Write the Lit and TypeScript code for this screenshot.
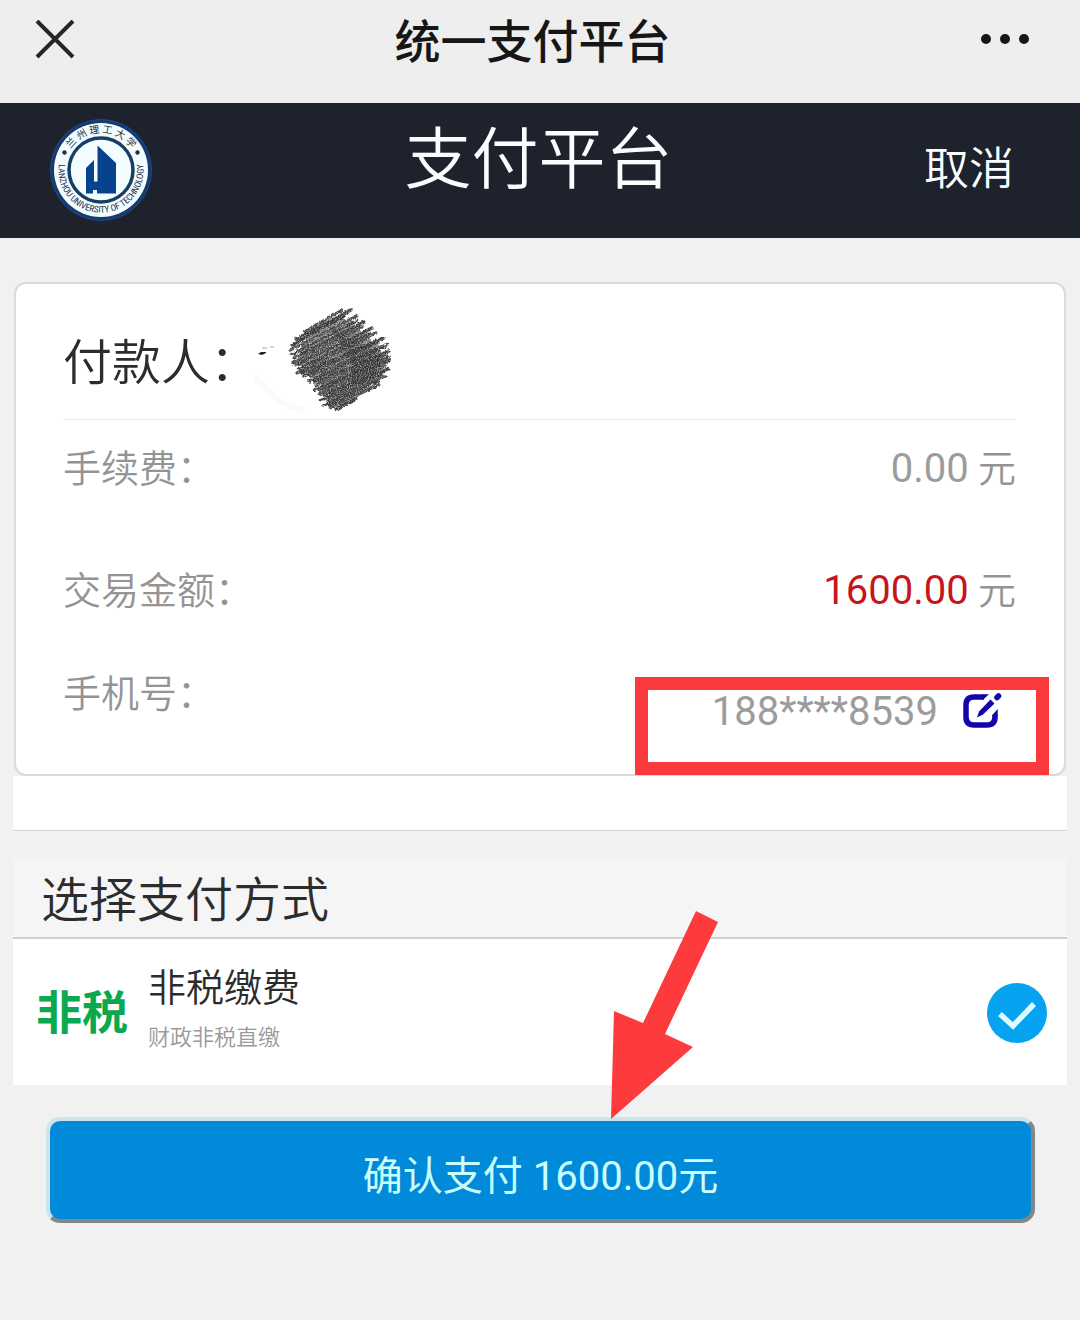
import { LitElement, html, css, svg } from "lit";
import { customElement, property } from "lit/decorators.js";

@customElement("university-seal")
class UniversitySeal extends LitElement {
  static styles = css`
    :host { display: block; width: 104px; height: 104px; }
    .seal { display: block; width: 100%; height: 100%; }
    .latin { font: 9px "Liberation Sans Narrow", "Roboto Condensed", sans-serif; fill: #23304a; }
    .han { font: 10px "Noto Sans CJK SC", sans-serif; fill: #23303c; }
  `;

  render() {
    return html`
      <svg class="seal" viewBox="0 0 104 104" role="img" aria-label="兰州理工大学">
        <defs>
          <path id="lower" d="M11 41 A42.500 42.500 0 1 0 93 41" />
          <path id="upper" d="M18.600 36 A37 37 0 0 1 85.400 36" />
        </defs>
        <circle cx="52" cy="52" r="50.500" fill="#163a70" stroke="#1d4a80" stroke-width="1" />
        <circle cx="52" cy="52" r="47" fill="#f3fcff" />
        <circle cx="52" cy="52" r="32" fill="#f3fcff" stroke="#173f63" stroke-width="3.500" />
        <circle cx="15.500" cy="34.500" r="2.200" fill="#26343e" />
        <circle cx="88.500" cy="34.500" r="2.200" fill="#26343e" />
        <text class="han"><textPath href="#upper" startOffset="50%" text-anchor="middle">兰 州 理 工 大 学</textPath></text>
        <text class="latin"><textPath href="#lower" startOffset="50%" text-anchor="middle">LANZHOU UNIVERSITY OF TECHNOLOGY</textPath></text>
        <path fill="#07428f" d="M48.500 27.500 L67 45 V75.500 H48 V72 H44 V75.500 H37 V50 L45 42 V63.500 H48.500 Z" />
      </svg>
    `;
  }
}

@customElement("scribble-mark")
class ScribbleMark extends LitElement {
  static styles = css`
    :host { display: block; width: 144px; height: 112px; }
    .mark { display: block; width: 100%; height: 100%; }
  `;

  /* Start and end point of each pen stroke, from the top down. */
  private strokes = [
    [50, 30, 88, 8], [42, 37, 97, 8], [38, 43, 90, 14], [36, 48, 103, 14],
    [37, 53, 104, 18], [40, 56, 110, 20], [39, 61, 108, 25], [42, 63, 118, 26],
    [44, 67, 116, 31], [43, 71, 122, 31], [48, 71, 129, 36], [50, 74, 124, 40],
    [56, 74, 134, 42], [55, 79, 130, 45], [60, 80, 135, 49], [62, 83, 132, 53],
    [60, 88, 135, 55], [66, 88, 136, 58], [65, 92, 131, 64], [70, 93, 134, 67],
    [67, 98, 128, 72], [73, 98, 131, 74], [70, 103, 124, 79], [76, 103, 125, 83],
    [76, 106, 112, 89], [82, 107, 102, 97],
  ];

  render() {
    return html`
      <svg class="mark" viewBox="0 0 144 112" aria-hidden="true">
        <defs>
          <filter id="rough" x="-10%" y="-10%" width="120%" height="120%" color-interpolation-filters="sRGB">
            <feTurbulence type="fractalNoise" baseFrequency="0.3" numOctaves="2" seed="4" result="n" />
            <feDisplacementMap in="SourceGraphic" in2="n" scale="4" xChannelSelector="R" yChannelSelector="G" result="d" />
            <feTurbulence type="fractalNoise" baseFrequency="0.9" numOctaves="1" seed="9" />
            <feColorMatrix values="0 0 0 0 0  0 0 0 0 0  0 0 0 0 0  0 0 0 -2 1.950" result="g" />
            <feComposite in="d" in2="g" operator="in" />
          </filter>
        </defs>
        <path d="M0 72 Q22 104 50 108" fill="none" stroke="#fafafa" stroke-width="6" />
        <path d="M4 52 l3 -2 h5 v1 l-4 2 z" fill="#222" />
        <path d="M8 46 h5 M16 45 h4" stroke="#aaa" stroke-width="1" />
        <g filter="url(#rough)" stroke-linecap="round">
          <polygon points="46,46 62,28 86,14 98,20 112,34 126,44 130,62 120,78 92,96 78,98 68,84 46,62" fill="#555" opacity="0.700" />
          ${this.strokes.map(([x1, y1, x2, y2], i) => svg`<line x1=${x1} y1=${y1} x2=${x2} y2=${y2}
            stroke=${i % 3 ? "#3c3c3c" : "#4c4c4c"} stroke-width=${i % 4 ? 3.2 : 2.6} />`)}
          <path d="M74 24 L112 44 L128 54 L122 72 L96 84 L98 60 Z" fill="#333" opacity="0.600" />
        </g>
      </svg>
    `;
  }
}

@customElement("amount-row")
class AmountRow extends LitElement {
  @property() label = "";
  @property() amount = "";
  @property({ type: Boolean }) strong = false;

  static styles = css`
    :host { display: flex; justify-content: space-between; align-items: center; }
    .label, .value { color: #949494; }
    .number { font-size: 40px; font-weight: 400; color: #9c9c9c; }
    .strong { color: #c4161c; }
  `;

  render() {
    return html`
      <span class="label">${this.label}：</span>
      <span class="value"><span class="number ${this.strong ? "strong" : ""}">${this.amount}</span> 元</span>
    `;
  }
}

@customElement("app-root")
class AppRoot extends LitElement {
  static styles = css`
    :host {
      display: block;
      min-height: 100vh;
      background: #f1f1f1;
      color: #2c2c2c;
      font-family: Roboto, "Noto Sans CJK SC", sans-serif;
      font-size: 38px;
      font-weight: 350;
      line-height: 56px;
    }
    * { box-sizing: border-box; }
    h1, h2, p { margin: 0; font-weight: inherit; }
    button { font: inherit; background: none; border: 0; padding: 0; cursor: pointer; }
    svg { display: block; }

    .browser-bar {
      display: grid;
      grid-template-columns: 1fr auto 1fr;
      align-items: center;
      height: 103px;
      padding: 0 50px 24px 35px;
      background: #eee;
    }
    .browser-title { padding-top: 4px; font-size: 46px; font-weight: 500; color: #161616; }
    .more { justify-self: end; }

    .site-header {
      display: grid;
      grid-template-columns: 1fr auto 1fr;
      height: 135px;
      padding: 15px 66px 0 49px;
      background: #1e222d;
      color: #f8feff;
    }
    .site-title { padding: 4px 0 0 14px; font-size: 67px; line-height: 76px; }
    .cancel { justify-self: end; align-self: start; margin-top: 24px; font-size: 45px; color: inherit; }

    .details {
      position: relative;
      margin: 44px 14px 0;
      padding: 24px 48px 0 47px;
      border: 2px solid #dadada;
      border-radius: 12px;
      background: #fff;
    }
    .payer {
      display: flex;
      height: 112px;
      border-bottom: 1px solid #eaeaea;
    }
    .payer-label { margin-top: 28px; font-size: 49px; }
    .payer-name { margin: -6px 0 0 -5px; }
    .rows { display: grid; grid-template-rows: 98px 146px 110px; align-items: center; }
    .phone { display: flex; justify-content: space-between; align-self: start; margin-top: 2px; }
    .phone-label { color: #949494; }
    .phone-value {
      display: flex;
      align-items: center;
      gap: 24px;
      margin: 18px 14px 0 0;
      color: #9c9c9c;
      font-size: 40px;
      font-weight: 400;
    }
    .edit { padding-bottom: 3px; }
    .frame {
      position: absolute;
      right: 15px;
      bottom: -1px;
      width: 414px;
      height: 98px;
      border: 13px solid #fb3a3e;
      pointer-events: none;
    }
    .strip { height: 55px; margin: 0 13px; background: #fff; border-bottom: 1px solid #d6d6d6; }

    .methods { position: relative; margin: 28px 13px 0; }
    .methods-title {
      padding: 12px 28px 6px;
      border-bottom: 2px solid #d2d2d2;
      background: #f5f5f5;
      font-size: 48px;
      line-height: 60px;
    }
    .method {
      display: flex;
      align-items: center;
      gap: 20px;
      height: 146px;
      padding: 2px 20px 0 23px;
      background: #fff;
    }
    .badge { color: #0aa84f; font-size: 46px; font-weight: 700; }
    .method-text { flex: 1; display: grid; gap: 10px; padding-bottom: 8px; }
    .method-name { line-height: 48px; }
    .method-note { font-size: 22px; line-height: 32px; color: #9a9a9a; }
    .choice { display: grid; width: 60px; height: 60px; }
    .choice > * { grid-area: 1 / 1; }
    .radio { appearance: none; width: 60px; height: 60px; margin: 0; border-radius: 50%; background: #ddd; }
    .radio:checked { background: #07a2f0; }
    .arrow { position: absolute; left: 56.600%; top: 50px; pointer-events: none; }

    .pay {
      display: block;
      width: calc(100% - 91px);
      margin: 32px 45px 0 46px;
      padding: 28px 0 14px;
      border: 4px solid;
      border-color: #cce4ec #848688 #848688 #cce4ec;
      border-radius: 14px;
      background: #028ada;
      color: #c9ffff;
      font-size: 40px;
      font-weight: 400;
    }
  `;

  render() {
    return html`
      <header class="browser-bar">
        <button class="close" aria-label="关闭">
          <svg width="40" height="40" viewBox="0 0 40 40">
            <path d="M2 1 L38 37 M38 1 L2 37" stroke="#262626" stroke-width="4" />
          </svg>
        </button>
        <span class="browser-title">统一支付平台</span>
        <button class="more" aria-label="更多">
          <svg width="50" height="12" viewBox="0 0 50 12" fill="#161616">
            <circle cx="6" cy="5" r="5" /><circle cx="25" cy="5" r="5" /><circle cx="44" cy="5" r="5" />
          </svg>
        </button>
      </header>

      <div class="site-header">
        <university-seal></university-seal>
        <h1 class="site-title">支付平台</h1>
        <button class="cancel">取消</button>
      </div>

      <main>
        <section class="details">
          <div class="payer">
            <span class="payer-label">付款人：</span>
            <scribble-mark class="payer-name"></scribble-mark>
          </div>
          <div class="rows">
            <amount-row label="手续费" amount="0.00"></amount-row>
            <amount-row label="交易金额" amount="1600.00" strong></amount-row>
            <div class="phone">
              <span class="phone-label">手机号：</span>
              <span class="phone-value">
                <span>188****8539</span>
                <button class="edit" aria-label="修改手机号">
                  <svg width="40" height="38" viewBox="0 0 40 38" fill="none" stroke="#1206a8">
                    <path d="M22 5 H12 Q4 5 4 13 V25 Q4 33 12 33 H25 Q33 33 33 25 V23" stroke-width="5.500" />
                    <path d="M30.250 23 L35.750 17 V24 H30.250 Z" fill="#1206a8" stroke="none" />
                    <path d="M21 2.250 H27 L21 7.750 H20 Z" fill="#1206a8" stroke="none" />
                    <path d="M28.500 7.500 L32.500 11.500 L21 22.500 L15 25.500 L17 19.500 Z" fill="#1206a8" stroke="none" />
                    <path d="M35 5.500 L36.500 4" stroke-width="5.500" stroke-linecap="round" />
                  </svg>
                </button>
              </span>
            </div>
          </div>
          <div class="frame"></div>
        </section>
        <div class="strip"></div>

        <section class="methods">
          <h2 class="methods-title">选择支付方式</h2>
          <label class="method">
            <span class="badge">非税</span>
            <span class="method-text">
              <span class="method-name">非税缴费</span>
              <span class="method-note">财政非税直缴</span>
            </span>
            <span class="choice">
              <input class="radio" type="radio" name="method" checked />
              <svg width="60" height="60" viewBox="0 0 60 60" fill="none">
                <path d="M13 31 L26 43 L47 21" stroke="#dcfbff" stroke-width="5.500" />
              </svg>
            </span>
          </label>
          <svg class="arrow" width="110" height="212" viewBox="0 0 110 212">
            <path d="M1 210 L4 102 L33 114 L86 2 L108 13 L55 125 L83 138 Z" fill="#fd3b3d" />
          </svg>
        </section>

        <button class="pay">确认支付 1600.00元</button>
      </main>
    `;
  }
}
